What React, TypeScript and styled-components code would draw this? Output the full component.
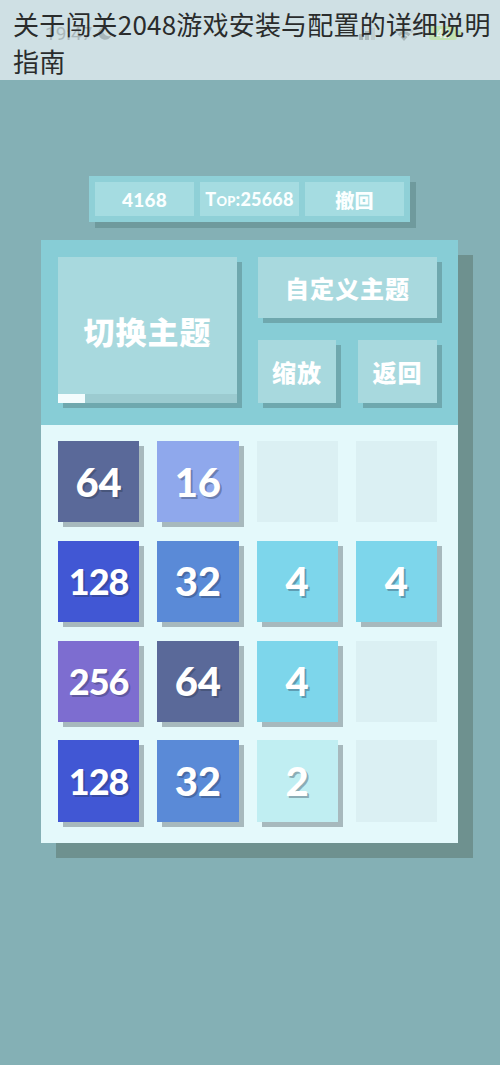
import React from 'react';
import styled, { createGlobalStyle } from 'styled-components';

const GlobalStyle = createGlobalStyle`
  html, body {
    margin: 0;
    padding: 0;
    background: #84b0b5;
  }
  * {
    box-sizing: border-box;
  }
`;

const Page = styled.div`
  width: 500px;
  min-height: 1065px;
  background: #84b0b5;
  font-family: "Noto Sans CJK SC", "Noto Sans", sans-serif;
`;

const Header = styled.header`
  position: relative;
  height: 80px;
  background: #cfe0e4;
  padding: 5px 4px 0 13px;
  overflow: hidden;
`;

const StatusBar = styled.div`
  position: absolute;
  left: 45px;
  right: 38px;
  top: 20px;
  height: 26px;
  display: flex;
  align-items: center;
  justify-content: space-between;
  opacity: 0.55;
`;

const Clock = styled.span`
  display: flex;
  align-items: center;
  gap: 3px;
  font-family: "Roboto", "Liberation Sans", sans-serif;
  font-size: 19px;
  color: #8a9597;
`;

const StatusIcons = styled.span`
  display: flex;
  align-items: center;
  gap: 12px;
`;

const Title = styled.h1`
  position: relative;
  margin: 0;
  font-size: 26px;
  line-height: 37px;
  font-weight: 400;
  color: #2a2c2c;
  letter-spacing: 0.2px;
`;

const Main = styled.main`
  display: flex;
  flex-direction: column;
  align-items: center;
  padding-top: 96px;
`;

const ScoreBar = styled.div`
  width: 321px;
  height: 46px;
  padding: 6px;
  display: grid;
  grid-template-columns: repeat(3, 1fr);
  gap: 6px;
  background: #8fd0d7;
  box-shadow: 6px 6px 0 #6f9a9d;
  margin-left: -1px;
`;

const ScoreCell = styled.div`
  display: flex;
  align-items: center;
  justify-content: center;
  background: #a5dce1;
  color: #fbffff;
  font-family: "Lato", "Noto Sans CJK SC", sans-serif;
  font-weight: 900;
  font-size: 19px;
  letter-spacing: 0.2px;
`;

const SmallCaps = styled.span`
  font-variant: small-caps;
  font-size: 18px;
`;

const Panel = styled.section`
  margin-top: 18px;
  margin-left: -1px;
  width: 417px;
  box-shadow: 15px 15px 0 #6e918f;
`;

const Controls = styled.div`
  height: 185px;
  background: #87cdd6;
  padding: 17px 21px 0 17px;
  display: grid;
  grid-template-columns: 179px 179px;
  column-gap: 21px;
`;

const RightColumn = styled.div`
  display: grid;
  grid-template-rows: 61px 63px;
  row-gap: 22px;
`;

const ButtonRow = styled.div`
  display: grid;
  grid-template-columns: 78px 79px;
  column-gap: 22px;
`;

const ControlButton = styled.button<{ size?: number }>`
  position: relative;
  border: none;
  padding: 0;
  margin: 0;
  background: #a8d9de;
  box-shadow: 5px 5px 0 #6fa8ae;
  color: #ffffff;
  font-family: "Noto Sans CJK SC", sans-serif;
  font-weight: 900;
  font-size: ${p => p.size ?? 24}px;
  letter-spacing: 1px;
  display: flex;
  align-items: center;
  justify-content: center;
  overflow: hidden;
`;

const BigButton = styled(ControlButton)`
  height: 146px;
`;

const Progress = styled.div`
  position: absolute;
  left: 0;
  right: 0;
  bottom: 0;
  height: 9px;
  background: #9ccbd0;
`;

const ProgressFill = styled.div`
  height: 100%;
  background: #f3fcfd;
`;

const Board = styled.div`
  background: #e4f9fb;
  padding: 16px 21px 21px 17px;
  display: grid;
  grid-template-columns: repeat(4, 1fr);
  column-gap: 18px;
  row-gap: 18.5px;
`;

const tileColors: Record<number, string> = {
  2: '#c0eef2',
  4: '#7dd6eb',
  16: '#8fa8ec',
  32: '#5a8ad7',
  64: '#5a6999',
  128: '#4157d4',
  256: '#7d6dd0',
};

const Tile = styled.div<{ value: number }>`
  aspect-ratio: 1 / 1;
  display: flex;
  align-items: center;
  justify-content: center;
  background: ${p => (p.value ? tileColors[p.value] : '#dbf0f3')};
  box-shadow: ${p => (p.value ? '5px 5px 0 #a7b9bd' : 'none')};
  color: #ffffff;
  font-family: "Lato", "DejaVu Sans", sans-serif;
  font-weight: 900;
  font-size: ${p => (p.value >= 100 ? 36 : 40)}px;
  letter-spacing: ${p => (p.value >= 100 ? -1 : 0)}px;
  text-shadow: 2px 2px 0 rgba(40, 50, 70, 0.35);
`;

const board = [
  [64, 16, 0, 0],
  [128, 32, 4, 4],
  [256, 64, 4, 0],
  [128, 32, 2, 0],
];

const Moon = () => (
  <svg width="18" height="18" viewBox="0 0 24 24">
    <path d="M14 3a9 9 0 1 0 8 12 7 7 0 0 1-8-12z" fill="#8a9597" />
  </svg>
);

const Signal = () => (
  <svg width="22" height="16" viewBox="0 0 22 16">
    <rect x="1" y="9" width="4" height="6" fill="#8a9597" />
    <rect x="7" y="6" width="4" height="9" fill="#8a9597" />
    <rect x="13" y="3" width="4" height="12" fill="#b5c0c2" />
  </svg>
);

const Wifi = () => (
  <svg width="24" height="18" viewBox="0 0 24 18">
    <path d="M12 17l-3.5-4a5 5 0 0 1 7 0z" fill="#8a9597" />
    <path d="M5.5 10a9 9 0 0 1 13 0l-2 2.2a6 6 0 0 0-9 0z" fill="#8a9597" />
    <path d="M2.5 6.8a13.5 13.5 0 0 1 19 0l-2 2.2a10.5 10.5 0 0 0-15 0z" fill="#a8b3b5" />
  </svg>
);

const Battery = () => (
  <svg width="34" height="18" viewBox="0 0 34 18">
    <rect x="1" y="2" width="28" height="14" rx="3" fill="#b7e28a" />
    <rect x="30" y="6" width="3" height="6" rx="1" fill="#b7e28a" />
    <text x="15" y="14" textAnchor="middle" fontSize="12" fontFamily="Roboto, sans-serif" fill="#ffffff">42</text>
  </svg>
);

const App: React.FC = () => {
  return (
    <Page>
      <GlobalStyle />
      <Header>
        <StatusBar>
          <Clock>19:47 <Moon /></Clock>
          <StatusIcons>
            <Signal />
            <Wifi />
            <Battery />
          </StatusIcons>
        </StatusBar>
        <Title>关于闯关2048游戏安装与配置的详细说明指南</Title>
      </Header>

      <Main>
        <ScoreBar>
          <ScoreCell>4168</ScoreCell>
          <ScoreCell>
            <SmallCaps>Top:25668</SmallCaps>
          </ScoreCell>
          <ScoreCell>撤回</ScoreCell>
        </ScoreBar>

        <Panel>
          <Controls>
            <BigButton size={31}>
              切换主题
              <Progress>
                <ProgressFill style={{ width: '15%' }} />
              </Progress>
            </BigButton>
            <RightColumn>
              <ControlButton>自定义主题</ControlButton>
              <ButtonRow>
                <ControlButton>缩放</ControlButton>
                <ControlButton>返回</ControlButton>
              </ButtonRow>
            </RightColumn>
          </Controls>

          <Board>
            {board.flat().map((v, i) => (
              <Tile key={i} value={v}>
                {v ? v : ''}
              </Tile>
            ))}
          </Board>
        </Panel>
      </Main>
    </Page>
  );
};

export default App;
